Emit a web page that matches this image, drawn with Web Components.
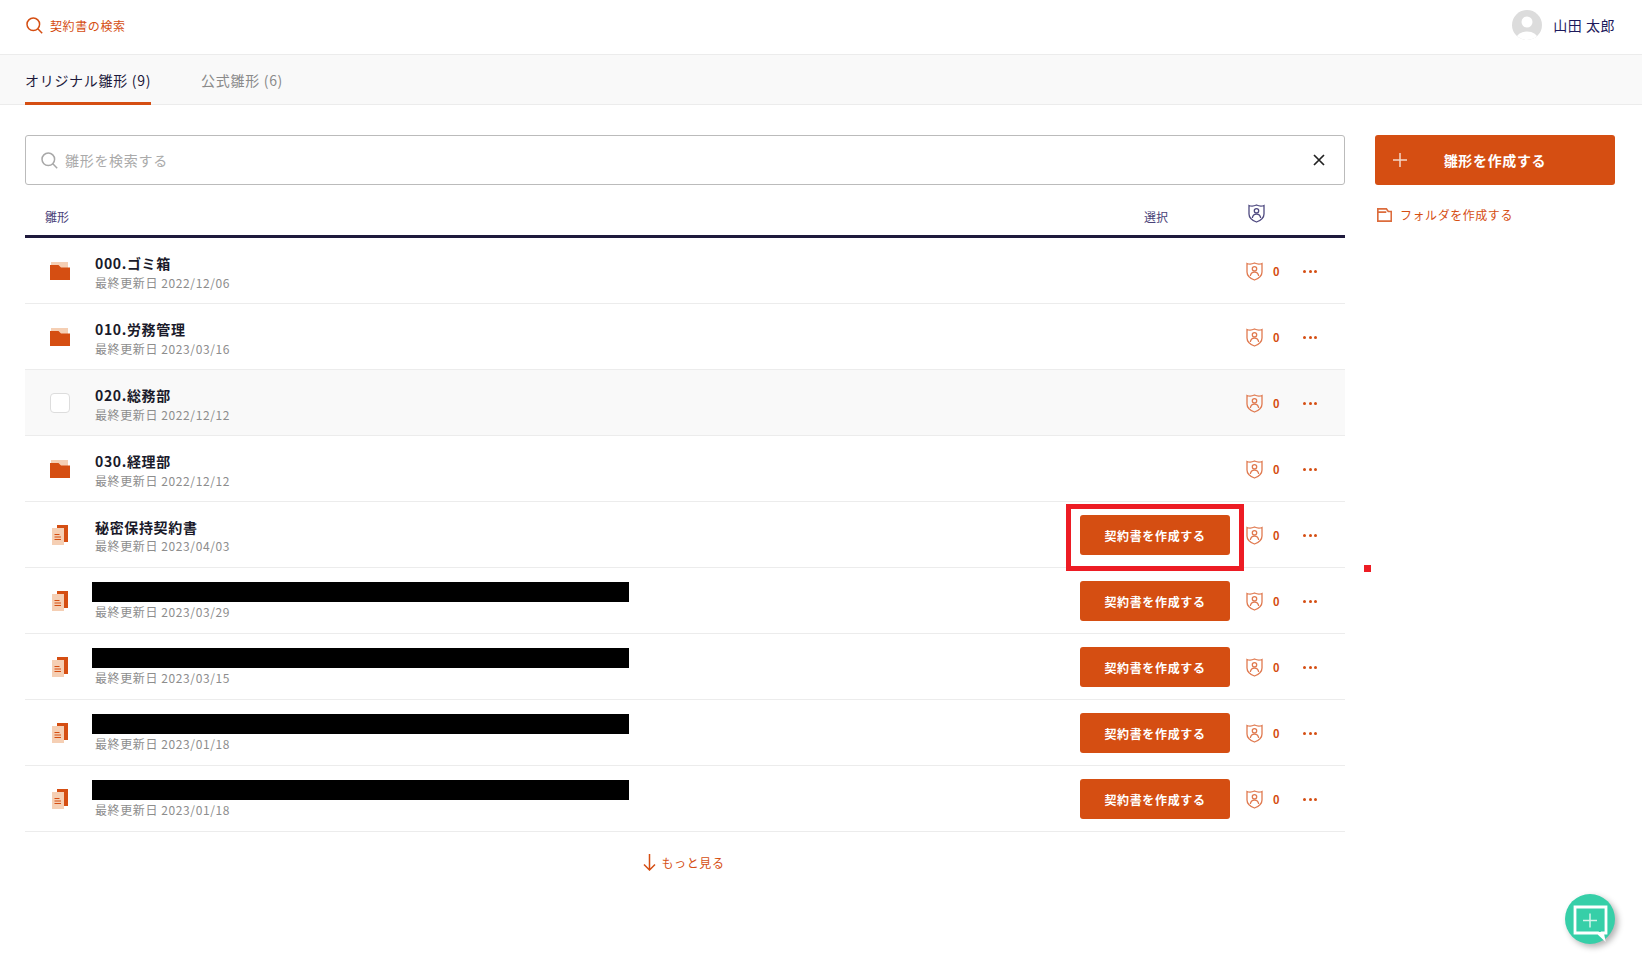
<!DOCTYPE html>
<html lang="ja">
<head>
<meta charset="utf-8">
<title>雛形</title>
<style>
  html, body { margin: 0; background: #fff; height: 100%; overflow: hidden; }
  body { font-family: "Noto Sans CJK JP", "Noto Sans", sans-serif; color: #1e1a3c; }
</style>
</head>
<body>
<app-header></app-header>
<app-tabs></app-tabs>
<template-page>
  <template-search slot="main"></template-search>
  <template-list slot="main">
    <template-row kind="folder" name="000.ゴミ箱" date="2022/12/06"></template-row>
    <template-row kind="folder" name="010.労務管理" date="2023/03/16"></template-row>
    <template-row kind="check" name="020.総務部" date="2022/12/12" hover></template-row>
    <template-row kind="folder" name="030.経理部" date="2022/12/12"></template-row>
    <template-row kind="doc" name="秘密保持契約書" date="2023/04/03" marked></template-row>
    <template-row kind="doc" date="2023/03/29"></template-row>
    <template-row kind="doc" date="2023/03/15"></template-row>
    <template-row kind="doc" date="2023/01/18"></template-row>
    <template-row kind="doc" date="2023/01/18"></template-row>
  </template-list>
  <more-link slot="main"></more-link>
  <side-actions slot="side"></side-actions>
</template-page>
<chat-fab></chat-fab>

<script>
const ORANGE = '#d54e12';

const ICONS = {
  search: (c) => `<svg width="17" height="17" viewBox="0 0 17 17" fill="none" stroke="${c}" stroke-width="1.5"><circle cx="7.3" cy="7.3" r="6.3"/><path d="M11.8 11.8l4.4 4.4"/></svg>`,
  shield: (c) => `<svg width="17" height="19" viewBox="0 0 17 19" fill="none" stroke="${c}" stroke-width="1.3"><path d="M1 1.500C3.500 2.500 6 2.200 8.500 1 11 2.200 13.500 2.500 16 1.500V10c0 4-3.500 6.500-7.500 8C4.500 16.500 1 14 1 10z"/><circle cx="8.500" cy="6.800" r="2.200"/><path d="M4.300 14c.4-2.400 2-3.900 4.200-3.900s3.800 1.500 4.200 3.900"/></svg>`,
  folder: () => `<svg width="20" height="18" viewBox="0 0 20 18" style="display:block"><path d="M1 0h17v6H1z" fill="#f5cfb4"/><path d="M0 3h8.500L11 5.500h9V18H0z" fill="${ORANGE}"/></svg>`,
  doc: () => `<svg width="16" height="20" viewBox="0 0 16 20" style="display:block"><path d="M5 0h11v17H5z" fill="${ORANGE}"/><path d="M0 3h12v17H0z" fill="#f5cfb4"/><path d="M2.500 9.500h5M2.500 12h6.500M2.500 14.500h6.500" stroke="${ORANGE}" stroke-width="1" fill="none"/></svg>`,
};

// small helper so each element only has to give its css and markup
class ShadowEl extends HTMLElement {
  render(css, html) {
    const root = this.shadowRoot || this.attachShadow({ mode: 'open' });
    root.innerHTML = `<style>${css}</style>${html}`;
  }
}

class AppHeader extends ShadowEl {
  connectedCallback() {
    this.render(`
      :host { display: flex; box-sizing: border-box; height: 55px; align-items: center; justify-content: space-between; padding: 0 27px 4px 26px; border-bottom: 1px solid #ececec; }
      .find { display: flex; align-items: center; gap: 7px; color: ${ORANGE}; font-size: 12px; letter-spacing: .6px; }
      svg { display: block; }
      .user { display: flex; align-items: center; gap: 11px; font-size: 14px; letter-spacing: .5px; color: #1e1a5c; }
      .avatar { display: block; width: 30px; height: 30px; }
    `, `
      <div class="find">${ICONS.search(ORANGE)}<span>契約書の検索</span></div>
      <div class="user">
        <svg class="avatar" viewBox="0 0 30 30"><defs><clipPath id="c"><circle cx="15" cy="15" r="15"/></clipPath></defs><circle cx="15" cy="15" r="15" fill="#dcdcdc"/><g clip-path="url(#c)"><circle cx="15" cy="12" r="5.500" fill="#fff"/><ellipse cx="15" cy="29" rx="11" ry="7.500" fill="#fff"/></g></svg>
        <span>山田 太郎</span>
      </div>
    `);
  }
}

class AppTabs extends ShadowEl {
  connectedCallback() {
    this.render(`
      :host { display: flex; box-sizing: border-box; height: 50px; padding-left: 25px; gap: 50px; background: #f9f9f9; border-bottom: 1px solid #ececec; font-size: 14px; letter-spacing: .7px; }
      .tab { box-sizing: border-box; height: 50px; padding-top: 13px; line-height: 24px; color: #8a8a8a; white-space: nowrap; }
      .on { color: #1e1a3c; border-bottom: 3px solid ${ORANGE}; }
    `, `<div class="tab on">オリジナル雛形 (9)</div><div class="tab">公式雛形 (6)</div>`);
  }
}

class TemplatePage extends ShadowEl {
  connectedCallback() {
    this.render(`
      :host { display: flex; gap: 30px; padding: 30px 27px 0 25px; }
      .main { width: 1320px; flex: none; }
      .side { width: 240px; flex: none; }
    `, `<div class="main"><slot name="main"></slot></div><div class="side"><slot name="side"></slot></div>`);
  }
}

class TemplateSearch extends ShadowEl {
  connectedCallback() {
    this.render(`
      :host { display: flex; box-sizing: border-box; height: 50px; align-items: center; gap: 7px; padding: 0 19px 0 15px; border: 1px solid #bbb; border-radius: 3px; }
      svg { display: block; flex: none; }
      span { flex: 1; font-size: 14px; letter-spacing: .7px; color: #aaa; }
    `, `${ICONS.search('#a8a8a8')}<span>雛形を検索する</span>
      <svg width="12" height="12" viewBox="0 0 12 12" fill="none" stroke="#222" stroke-width="1.700"><path d="M1 1l10 10M11 1L1 11"/></svg>`);
  }
}

class TemplateList extends ShadowEl {
  connectedCallback() {
    this.render(`
      :host { display: block; }
      .head { display: flex; box-sizing: border-box; height: 53px; align-items: center; padding: 12px 0 0 20px; border-bottom: 3px solid #1e1a3c; font-size: 12px; color: #4a4278; }
      .name { flex: 1; }
      .pick { width: 48px; text-align: center; margin-right: 69px; }
      .shield { width: 97px; height: 19px; margin-top: -6px; margin-left: -1px; }
      svg { display: block; }
    `, `<div class="head"><span class="name">雛形</span><span class="pick">選択</span><span class="shield">${ICONS.shield('#4f4a80')}</span></div><slot></slot>`);
  }
}

class TemplateRow extends ShadowEl {
  connectedCallback() {
    const kind = this.getAttribute('kind');
    const name = this.getAttribute('name');
    const icon = kind === 'check' ? '<div class="check"></div>' : ICONS[kind]();
    // spacing of the two text lines differs per row type in the reference
    const isDoc = kind === 'doc';
    const textTop = isDoc ? (name ? 3 : 2) : 3;
    const dateTop = isDoc ? (name ? 0 : 1) : 1;
    const marked = this.hasAttribute('marked');
    this.render(`
      :host { display: grid; box-sizing: border-box; height: 66px; position: relative; ${marked ? 'z-index: 1;' : ''} grid-template-columns: 20px 1fr 150px 115px; align-items: center; padding: 0 0 0 25px; border-bottom: 1px solid #ececec; background: ${this.hasAttribute('hover') ? '#f9f9f9' : '#fff'}; }
      .icon { display: flex; justify-content: center; }
      .check { box-sizing: border-box; width: 20px; height: 20px; background: #fff; border: 1px solid #ddd; border-radius: 4px; margin-top: 1px; }
      .text { padding-left: 25px; margin-top: ${textTop}px; }
      .name { font-size: 14px; line-height: 20px; font-weight: 700; letter-spacing: .65px; color: #1a1a2a; white-space: nowrap; }
      .date { font-size: 12px; line-height: 18px; letter-spacing: .6px; color: #8d8d8d; margin-top: ${dateTop}px; }
      .redact { width: 537px; height: 20px; margin-left: -3px; background: #000; }
      .btn { display: flex; height: 40px; margin-top: 1px; align-items: center; justify-content: center; background: ${ORANGE}; border-radius: 3px; color: #fff; font-size: 12px; font-weight: 700; letter-spacing: .65px; }
      .meta { display: flex; align-items: center; padding-left: 16px; margin-top: 1px; }
      .meta svg { flex: none; display: block; }
      .zero { width: 6px; margin-left: 10px; font-size: 11px; font-weight: 700; color: ${ORANGE}; }
      .dots { margin-left: 24px; display: flex; gap: 2.500px; }
      .dots i { width: 3px; height: 3px; border-radius: 50%; background: ${ORANGE}; }
      .mark { position: absolute; left: 1041px; top: 2px; width: 178px; height: 67px; box-sizing: border-box; border: 5px solid #ed1c24; pointer-events: none; }
      .dot { position: absolute; left: 1339px; top: 63px; width: 7px; height: 7px; background: #ed1c24; }
    `, `
      <div class="icon">${icon}</div>
      <div class="text">
        ${name ? `<div class="name">${name}</div>` : '<div class="redact"></div>'}
        <div class="date">最終更新日 ${this.getAttribute('date')}</div>
      </div>
      ${isDoc ? '<div class="btn">契約書を作成する</div>' : '<div></div>'}
      <div class="meta">${ICONS.shield('#e07a50')}<span class="zero">0</span><span class="dots"><i></i><i></i><i></i></span></div>
      ${marked ? '<div class="mark"></div><div class="dot"></div>' : ''}
    `);
  }
}

class MoreLink extends ShadowEl {
  connectedCallback() {
    this.render(`
      :host { display: flex; align-items: center; justify-content: center; gap: 5px; height: 60px; padding-right: 2px; color: ${ORANGE}; font-size: 12px; letter-spacing: .6px; }
      svg { display: block; }
    `, `<svg width="13" height="17" viewBox="0 0 13 17" fill="none" stroke="${ORANGE}" stroke-width="1.500"><path d="M6.500 0v15.500M1 10.500l5.500 5.500 5.500-5.500"/></svg><span>もっと見る</span>`);
  }
}

class SideActions extends ShadowEl {
  connectedCallback() {
    this.render(`
      :host { display: block; }
      .create { display: grid; grid-template-columns: 1fr auto 1fr; height: 50px; align-items: center; background: ${ORANGE}; border-radius: 3px; color: #fff; font-size: 14px; font-weight: 700; letter-spacing: .65px; }
      .create svg { margin-left: 18px; display: block; }
      .folder { display: flex; align-items: center; gap: 8px; margin: 21px 0 0 2px; color: ${ORANGE}; font-size: 12px; letter-spacing: .55px; }
      .folder svg { display: block; }
    `, `
      <div class="create">
        <svg width="14" height="14" viewBox="0 0 14 14" stroke="#f5d8c8" stroke-width="1.500"><path d="M7 0v14M0 7h14"/></svg>
        <span>雛形を作成する</span><span></span>
      </div>
      <div class="folder">
        <svg width="15" height="14" viewBox="0 0 15 14" fill="none" stroke="#dc6c3c" stroke-width="1.700"><path d="M.8 13.200V.8h8.500l2 2.700h3v9.700zM.8 4.200h8.500"/></svg>
        <span>フォルダを作成する</span>
      </div>
    `);
  }
}

class ChatFab extends ShadowEl {
  connectedCallback() {
    this.render(`
      :host { position: fixed; left: 1565px; top: 894px; width: 50px; height: 50px; border-radius: 50%; background: #36cfa8; box-shadow: 3px 3px 6px rgba(0,0,0,.3); }
      svg { display: block; }
    `, `<svg width="50" height="50" viewBox="0 0 50 50" fill="none"><path d="M10 13h31v26h-3.500l1 5-5.500-5H10z" stroke="#fff" stroke-width="2.800"/><path d="M33 38l5 6 0-6z" fill="#fff"/><path d="M25 19.500v14M18 26.500h14" stroke="#d3f4ea" stroke-width="1.500"/></svg>`);
  }
}

customElements.define('app-header', AppHeader);
customElements.define('app-tabs', AppTabs);
customElements.define('template-page', TemplatePage);
customElements.define('template-search', TemplateSearch);
customElements.define('template-list', TemplateList);
customElements.define('template-row', TemplateRow);
customElements.define('more-link', MoreLink);
customElements.define('side-actions', SideActions);
customElements.define('chat-fab', ChatFab);
</script>
</body>
</html>
